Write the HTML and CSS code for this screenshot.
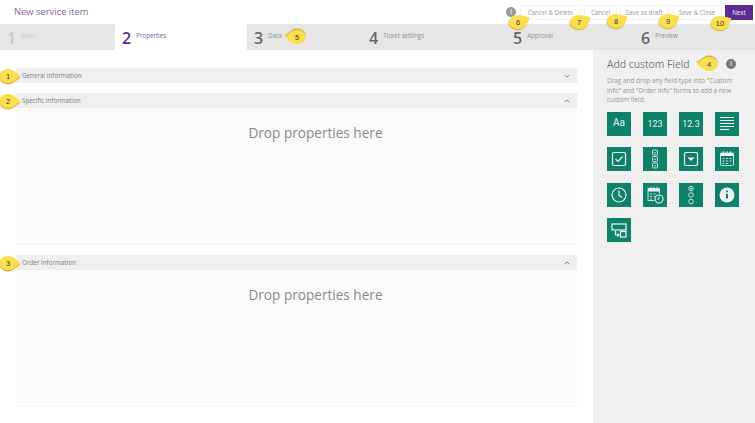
FILE: index.html
```html
<!DOCTYPE html>
<html lang="en">
<head>
  <meta charset="UTF-8" />
  <meta name="viewport" content="width=device-width, initial-scale=1.0" />
  <title>New service item</title>
  <link rel="stylesheet" href="styles.css">
</head>
<body>
  <header class="topbar">
    <h1 class="title">New service item</h1>
    <div class="actions">
      <span class="info info-top">i</span>
      <button class="btn btn-delete">Cancel &amp; Delete</button>
      <button class="btn btn-cancel">Cancel</button>
      <button class="btn btn-draft">Save as draft</button>
      <button class="btn btn-close">Save &amp; Close</button>
      <button class="btn btn-next">Next</button>
    </div>
  </header>

  <nav class="steps">
    <div class="step step-1 disabled"><b>1</b><span>Start</span></div>
    <div class="step step-2 active"><b>2</b><span>Properties</span></div>
    <div class="step step-3"><b>3</b><span>Data</span></div>
    <div class="step step-4"><b>4</b><span>Ticket settings</span></div>
    <div class="step step-5"><b>5</b><span>Approval</span></div>
    <div class="step step-6"><b>6</b><span>Preview</span></div>
  </nav>

  <div class="main">
    <section class="content">
      <div class="group">
        <div class="group-head">General information
          <svg class="chev" viewBox="0 0 8 5"><path d="M1 1l3 3 3-3"/></svg>
        </div>
      </div>
      <div class="group">
        <div class="group-head">Specific information
          <svg class="chev" viewBox="0 0 8 5"><path d="M1 4l3-3 3 3"/></svg>
        </div>
        <div class="drop">Drop properties here</div>
      </div>
      <div class="group">
        <div class="group-head">Order information
          <svg class="chev" viewBox="0 0 8 5"><path d="M1 4l3-3 3 3"/></svg>
        </div>
        <div class="drop">Drop properties here</div>
      </div>
    </section>

    <aside class="sidebar">
      <div class="side-title">
        <h2>Add custom Field</h2>
        <span class="info">i</span>
      </div>
      <p class="side-text">Drag and drop any field type into "Custom info" and "Order info" forms to add a new custom field.</p>
      <div class="fields">
        <div class="field"><span class="field-aa">Aa</span></div>
        <div class="field"><span>123</span></div>
        <div class="field"><span>12.3</span></div>
        <div class="field">
          <svg viewBox="0 0 24 24"><path d="M5 5.500h14M5 8.500h14M5 11.500h14M5 14.500h14M5 17.500h9"/></svg>
        </div>
        <div class="field">
          <svg viewBox="0 0 24 24"><rect x="5.500" y="5.500" width="13" height="13" rx="1.500"/><path d="M8.500 12l2.500 2.500 4.500-5"/></svg>
        </div>
        <div class="field">
          <svg class="thin" viewBox="0 0 24 24"><rect x="9.500" y="3" width="5" height="5" rx=".8"/><rect x="9.500" y="9.500" width="5" height="5" rx=".8"/><rect x="9.500" y="16" width="5" height="5" rx=".8"/><path d="M10.800 5.500l1 1 1.500-1.800M10.800 12l1 1 1.500-1.800M10.800 18.500l1 1 1.500-1.800"/></svg>
        </div>
        <div class="field">
          <svg viewBox="0 0 24 24"><rect x="5.500" y="5.500" width="13" height="13" rx="1.500"/><path class="solid" d="M8.500 10.500h7L12 14z"/></svg>
        </div>
        <div class="field">
          <svg class="thin" viewBox="0 0 24 24"><rect class="solid" x="5.500" y="6" width="13" height="3"/><rect x="5.500" y="6" width="13" height="12.500" rx="1"/><path d="M8.500 4v3M12 4v3M15.500 4v3M7.500 11.500h2M11 11.500h2M14.500 11.500h2M7.500 14h2M11 14h2M14.500 14h2M7.500 16.500h2M11 16.500h2"/></svg>
        </div>
        <div class="field">
          <svg viewBox="0 0 24 24"><circle cx="12" cy="12" r="7"/><path d="M12 7.500V12.500l3 2"/></svg>
        </div>
        <div class="field">
          <svg class="thin" viewBox="0 0 24 24"><rect class="solid" x="5" y="5.500" width="11.500" height="3"/><path d="M11 17.500H5V5.500h11.500v5M8 3.500v3M11 3.500v3M14 3.500v3M7 11h2M10.500 11h2M7 13.500h2M10.500 13.500h1M7 16h2"/><circle class="bold" cx="16" cy="16" r="4"/><path d="M16 13.800v2.400h-2"/></svg>
        </div>
        <div class="field">
          <svg class="thin" viewBox="0 0 24 24"><circle cx="12" cy="5.500" r="2.300"/><circle class="solid" cx="12" cy="5.500" r=".9"/><circle cx="12" cy="12" r="2.300"/><circle cx="12" cy="18.500" r="2.300"/></svg>
        </div>
        <div class="field">
          <svg viewBox="0 0 24 24"><circle class="solid" cx="12" cy="12" r="7.500"/><path class="mark" d="M12 11v4.500"/><circle class="dot" cx="12" cy="8.500" r="1.100"/></svg>
        </div>
        <div class="field">
          <svg viewBox="0 0 24 24"><rect x="5" y="6" width="14" height="6"/><rect x="13.500" y="13.500" width="5.500" height="5.500"/><path d="M8.500 13v4h3.500M10.500 15.500l1.500 1.500-1.500 1.500"/></svg>
        </div>
      </div>
    </aside>
  </div>

  <!-- numbered callouts on top of the screenshot -->
  <span class="pin pin-r pin-general"><i>1</i></span>
  <span class="pin pin-r pin-specific"><i>2</i></span>
  <span class="pin pin-r pin-order"><i>3</i></span>
  <span class="pin pin-l pin-add"><i>4</i></span>
  <span class="pin pin-l pin-data"><i>5</i></span>
  <span class="pin pin-u pin-delete"><i>6</i></span>
  <span class="pin pin-u pin-cancel"><i>7</i></span>
  <span class="pin pin-u pin-draft"><i>8</i></span>
  <span class="pin pin-u pin-close"><i>9</i></span>
  <span class="pin pin-u pin-next"><i>10</i></span>
</body>
</html>
```

FILE: styles.css
```css
* {
  box-sizing: border-box;
}
html, body {
  height: 100%;
}
body {
  margin: 0;
  position: relative;
  overflow: hidden;
  background: white;
  color: #666;
  font-family: 'Open Sans', 'Noto Sans', sans-serif;
}

/* top bar */
.topbar {
  height: 24px;
  display: flex;
  justify-content: space-between;
}
.title {
  margin: 0;
  padding: 4px 0 0 14px;
  font-size: 9.4px;
  line-height: 15px;
  font-weight: 400;
  color: #84678f;
}
.actions {
  display: flex;
  align-items: flex-start;
  padding: 5px 2px 0 0;
}
.btn {
  height: 15px;
  padding: 0;
  border: 1px solid #f2f2f2;
  background: white;
  color: #9a9a9a;
  font-family: inherit;
  font-size: 6.2px;
}
.btn-delete { width: 61px; margin-right: 3px; }
.btn-cancel { width: 33px; margin-right: 2px; }
.btn-draft { width: 50px; margin-right: 3px; }
.btn-close { width: 50px; margin-right: 3px; }
.btn-next {
  width: 28px;
  border: none;
  background: #5c2d91;
  color: #eee;
}
.info {
  width: 10px;
  height: 10px;
  border-radius: 50%;
  background: #777;
  color: #ddd;
  font-size: 7px;
  line-height: 10px;
  font-weight: 700;
  text-align: center;
}
.info-top {
  margin: 2px 4px 0 0;
  background: #999;
}

/* wizard steps */
.steps {
  height: 26px;
  display: flex;
  background: #e6e6e6;
}
.step {
  display: flex;
  padding-left: 7px;
  color: #666;
}
.step b {
  font-size: 16px;
  line-height: 28px;
  font-weight: 600;
  margin-right: 5px;
}
.step span {
  font-size: 6.2px;
  line-height: 24px;
  color: #909090;
}
.step-1 { width: 115px; }
.step-2 { width: 132px; }
.step-3 { width: 115px; }
.step-4 { width: 144px; }
.step-5 { width: 128px; }
.disabled b, .disabled span {
  color: #c8c8c8;
}
.active {
  background: white;
}
.active b {
  color: #5c2d91;
}
.active span {
  color: #7b6390;
}

/* main area */
.main {
  height: 373px;
  display: flex;
}
.content {
  width: 593px;
  padding: 18px 16px 0;
  display: flex;
  flex-direction: column;
  gap: 10px;
}
.group-head {
  height: 15px;
  padding: 0 6px;
  display: flex;
  justify-content: space-between;
  align-items: center;
  background: #efefef;
  font-size: 6.3px;
  color: #808080;
}
.chev {
  width: 6px;
  height: 4px;
  margin-right: 1px;
  fill: none;
  stroke: #777;
  stroke-width: 1.2;
}
.drop {
  height: 137px;
  padding: 15px 0 0 38px;
  background: #fbfbfb;
  border-bottom: 1px solid #f4f4f4;
  text-align: center;
  font-size: 13.6px;
  line-height: 20px;
  color: #8a8a8a;
}

/* sidebar */
.sidebar {
  width: 162px;
  padding: 6px 14px 0;
  background: #f0f0f0;
}
.side-title {
  display: flex;
  justify-content: space-between;
  align-items: center;
  padding-right: 5px;
}
.side-title h2 {
  margin: 0;
  font-size: 10.3px;
  line-height: 16px;
  font-weight: 400;
  color: #7a7a7a;
}
.side-text {
  margin: 4px 0 0;
  width: 132px;
  font-size: 6.4px;
  line-height: 9.5px;
  color: #969696;
}
.fields {
  margin-top: 7px;
  display: grid;
  grid-template-columns: repeat(4, 24px);
  grid-auto-rows: 24px;
  column-gap: 12px;
  row-gap: 11.5px;
}
.field {
  display: flex;
  align-items: center;
  justify-content: center;
  background: #0f8168;
  color: #e8f3f0;
  font-family: Roboto, sans-serif;
  font-size: 9px;
}
.field-aa {
  font-size: 10px;
  margin-top: -2px;
}
.field svg {
  width: 24px;
  height: 24px;
  fill: none;
  stroke: #eef6f4;
  stroke-width: 1.2;
}
.field svg.thin {
  stroke-width: .8;
}
.field svg .solid {
  fill: #eef6f4;
  stroke: none;
}
.field svg .bold {
  fill: #0f8168;
  stroke-width: 1.1;
}
.field svg .mark {
  stroke: #0f8168;
  stroke-width: 2;
}
.field svg .dot {
  fill: #0f8168;
  stroke: none;
}

/* callouts */
.pin {
  position: absolute;
  width: 14px;
  height: 14px;
  display: flex;
  align-items: center;
  justify-content: center;
}
.pin::before {
  content: "";
  position: absolute;
  inset: 0;
  background: #fbdf4f;
  border-radius: 50% 0 50% 50%;
}
.pin i {
  position: relative;
  font-family: 'Liberation Sans', sans-serif;
  font-style: normal;
  font-size: 7.5px;
  color: #333;
}
.pin-r::before {
  transform: scaleX(1.25) rotate(45deg);
  box-shadow: 1px 1px 1px #d4b33a;
}
.pin-l::before {
  transform: scaleX(1.25) rotate(-135deg);
  box-shadow: 1px 1px 1px #d4b33a;
}
.pin-u::before {
  transform: scaleX(1.3) rotate(17deg);
  box-shadow: 0 1px 1px #d4b33a;
}
.pin-general { left: 1px; top: 69px; }
.pin-specific { left: 1px; top: 94px; }
.pin-order { left: 1px; top: 256px; }
.pin-add { left: 702px; top: 57px; }
.pin-data { left: 290px; top: 30px; }
.pin-delete { left: 511px; top: 15px; }
.pin-cancel { left: 572px; top: 15px; }
.pin-draft { left: 609px; top: 14px; }
.pin-close { left: 661px; top: 14px; }
.pin-next { left: 713px; top: 16px; }
```
